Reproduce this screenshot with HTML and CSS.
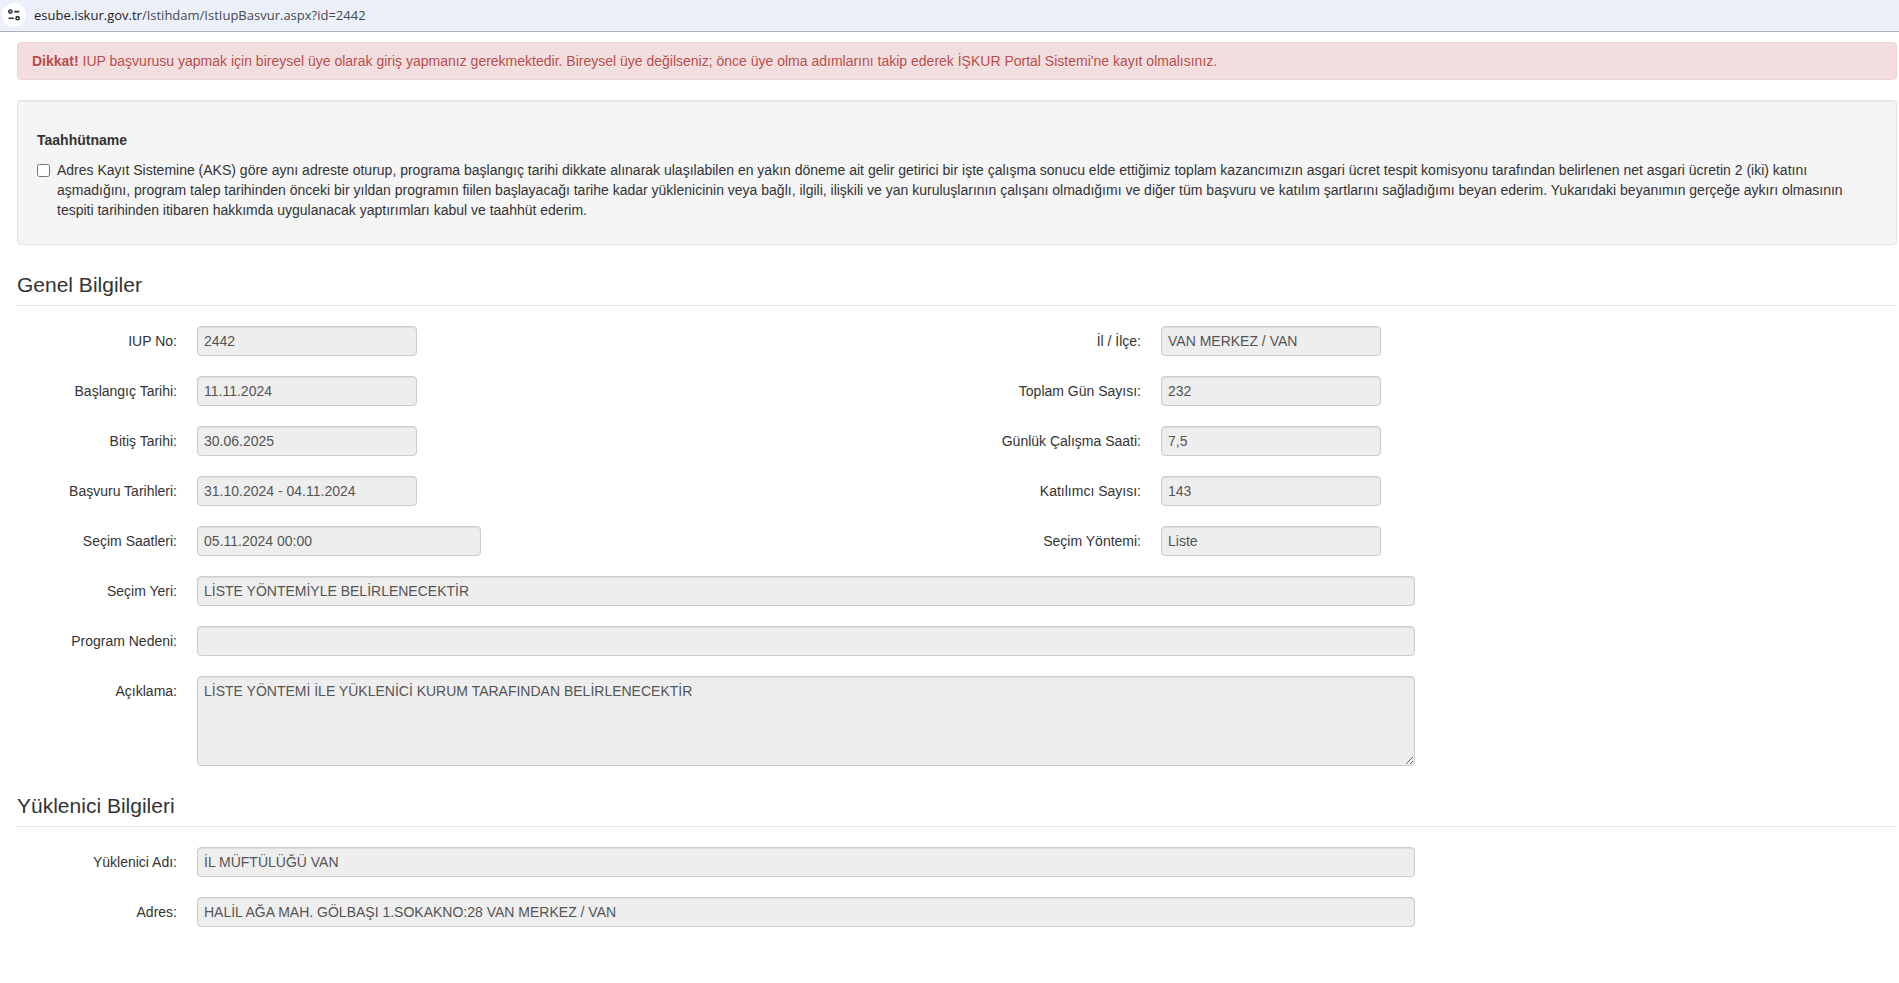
FILE: index.html
```html
<!DOCTYPE html>
<html lang="tr">
<head>
<meta charset="utf-8">
<title>İŞKUR - IUP Başvuru</title>
<link rel="stylesheet" href="styles.css">
</head>
<body>
<header class="address-bar">
  <button class="site-info" type="button" aria-label="Site bilgileri">
    <svg width="14" height="14" viewBox="0 0 14 14" fill="none" stroke="#303236" stroke-width="1.6" aria-hidden="true">
      <circle cx="3.4" cy="3.6" r="1.6"/>
      <path d="M7.2 3.6h5.2M1.6 10.2h5.2"/>
      <circle cx="10.6" cy="10.2" r="1.6"/>
    </svg>
  </button>
  <div class="address"><span class="address-host">esube.iskur.gov.tr</span>/Istihdam/IstIupBasvur.aspx?id=2442</div>
</header>
<main class="page">
  <div class="alert" role="alert"><strong>Dikkat!</strong> IUP başvurusu yapmak için bireysel üye olarak giriş yapmanız gerekmektedir. Bireysel üye değilseniz; önce üye olma adımlarını takip ederek İŞKUR Portal Sistemi'ne kayıt olmalısınız.</div>

  <section class="well">
    <h5 class="well-title">Taahhütname</h5>
    <div class="consent">
      <input class="consent-box" type="checkbox" id="taahhut">
      <label for="taahhut">Adres Kayıt Sistemine (AKS) göre aynı adreste oturup, programa başlangıç tarihi dikkate alınarak ulaşılabilen en yakın döneme ait gelir getirici bir işte çalışma sonucu elde ettiğimiz toplam kazancımızın asgari ücret tespit komisyonu tarafından belirlenen net asgari ücretin 2 (iki) katını aşmadığını, program talep tarihinden önceki bir yıldan programın fiilen başlayacağı tarihe kadar yüklenicinin veya bağlı, ilgili, ilişkili ve yan kuruluşlarının çalışanı olmadığımı ve diğer tüm başvuru ve katılım şartlarını sağladığımı beyan ederim. Yukarıdaki beyanımın gerçeğe aykırı olmasının tespiti tarihinden itibaren hakkımda uygulanacak yaptırımları kabul ve taahhüt ederim.</label>
    </div>
  </section>

  <form>
    <section class="group">
      <h2 class="legend">Genel Bilgiler</h2>
      <div class="columns">
        <div class="column">
          <div class="field"><label class="field-label" for="iupNo">IUP No:</label><input class="control" id="iupNo" type="text" value="2442" readonly></div>
          <div class="field"><label class="field-label" for="baslangic">Başlangıç Tarihi:</label><input class="control" id="baslangic" type="text" value="11.11.2024" readonly></div>
          <div class="field"><label class="field-label" for="bitis">Bitiş Tarihi:</label><input class="control" id="bitis" type="text" value="30.06.2025" readonly></div>
          <div class="field"><label class="field-label" for="basvuru">Başvuru Tarihleri:</label><input class="control" id="basvuru" type="text" value="31.10.2024 - 04.11.2024" readonly></div>
          <div class="field"><label class="field-label" for="secimSaat">Seçim Saatleri:</label><input class="control control-large" id="secimSaat" type="text" value="05.11.2024 00:00" readonly></div>
        </div>
        <div class="column">
          <div class="field"><label class="field-label" for="il">İl / İlçe:</label><input class="control" id="il" type="text" value="VAN MERKEZ / VAN" readonly></div>
          <div class="field"><label class="field-label" for="gun">Toplam Gün Sayısı:</label><input class="control" id="gun" type="text" value="232" readonly></div>
          <div class="field"><label class="field-label" for="saat">Günlük Çalışma Saati:</label><input class="control" id="saat" type="text" value="7,5" readonly></div>
          <div class="field"><label class="field-label" for="katilimci">Katılımcı Sayısı:</label><input class="control" id="katilimci" type="text" value="143" readonly></div>
          <div class="field"><label class="field-label" for="yontem">Seçim Yöntemi:</label><input class="control" id="yontem" type="text" value="Liste" readonly></div>
        </div>
      </div>
      <div class="field field-wide"><label class="field-label" for="secimYeri">Seçim Yeri:</label><input class="control" id="secimYeri" type="text" value="LİSTE YÖNTEMİYLE BELİRLENECEKTİR" readonly></div>
      <div class="field field-wide"><label class="field-label" for="neden">Program Nedeni:</label><input class="control" id="neden" type="text" value="" readonly></div>
      <div class="field field-wide"><label class="field-label" for="aciklama">Açıklama:</label><textarea class="control" id="aciklama" rows="4" readonly>LİSTE YÖNTEMİ İLE YÜKLENİCİ KURUM TARAFINDAN BELİRLENECEKTİR</textarea></div>
    </section>

    <section class="group">
      <h2 class="legend">Yüklenici Bilgileri</h2>
      <div class="field field-wide"><label class="field-label" for="yuklenici">Yüklenici Adı:</label><input class="control" id="yuklenici" type="text" value="İL MÜFTÜLÜĞÜ VAN" readonly></div>
      <div class="field field-wide"><label class="field-label" for="adres">Adres:</label><input class="control" id="adres" type="text" value="HALİL AĞA MAH. GÖLBAŞI 1.SOKAKNO:28 VAN MERKEZ / VAN" readonly></div>
    </section>
  </form>
</main>
</body>
</html>
```

FILE: styles.css
```css
* {
  box-sizing: border-box;
}

body {
  margin: 0;
  background: #fff;
  color: #333;
  font: 14px/20px "Liberation Sans", Arial, sans-serif;
}

.address-bar {
  display: flex;
  align-items: center;
  gap: 8px;
  height: 32px;
  padding: 0 2px 1px;
  background: #ecf0fa;
  border-bottom: 1px solid #abb0b8;
}

.site-info {
  display: flex;
  align-items: center;
  justify-content: center;
  width: 24px;
  height: 24px;
  padding: 0;
  border: 0;
  border-radius: 50%;
  background: #fff;
}

.address {
  color: #474a50;
  font-family: "Open Sans", "Noto Sans", sans-serif;
  font-size: 13px;
}

.address-host {
  color: #1f2024;
}

.page {
  padding: 10px 2px 20px 17px;
}

.alert {
  margin-bottom: 20px;
  padding: 8px 35px 8px 14px;
  border: 1px solid #eed3d7;
  border-radius: 4px;
  background: #f2dede;
  color: #b94a48;
  text-shadow: 0 1px 0 rgba(255, 255, 255, 0.5);
}

.well {
  margin-bottom: 20px;
  padding: 19px;
  border: 1px solid #e3e3e3;
  border-radius: 4px;
  background: #f5f5f5;
  box-shadow: inset 0 1px 1px rgba(0, 0, 0, 0.05);
}

.well-title {
  margin: 10px 0;
  font-size: 14px;
  line-height: 20px;
}

.consent {
  display: flex;
  align-items: flex-start;
  gap: 7px;
  margin-bottom: 5px;
}

.consent-box {
  flex: none;
  width: 13px;
  height: 13px;
  margin: 4px 0 0;
}

.legend {
  margin: 0 0 20px;
  border-bottom: 1px solid #e5e5e5;
  font-size: 21px;
  font-weight: 400;
  line-height: 40px;
}

.columns {
  display: grid;
  grid-template-columns: 1fr 1fr;
  gap: 48px;
}

.field {
  display: grid;
  grid-template-columns: 160px 1fr;
  column-gap: 20px;
  margin-bottom: 20px;
}

.field-wide {
  grid-template-columns: 160px 64.8%;
}

.field-label {
  padding-top: 5px;
  text-align: right;
}

.control {
  width: 220px;
  height: 30px;
  margin: 0;
  padding: 4px 6px;
  border: 1px solid #ccc;
  border-radius: 4px;
  background: #eee;
  box-shadow: inset 0 1px 1px rgba(0, 0, 0, 0.075);
  color: #555;
  font: inherit;
}

.control-large {
  width: 284px;
}

.field-wide .control {
  width: 100%;
}

textarea.control {
  height: 90px;
}
```
